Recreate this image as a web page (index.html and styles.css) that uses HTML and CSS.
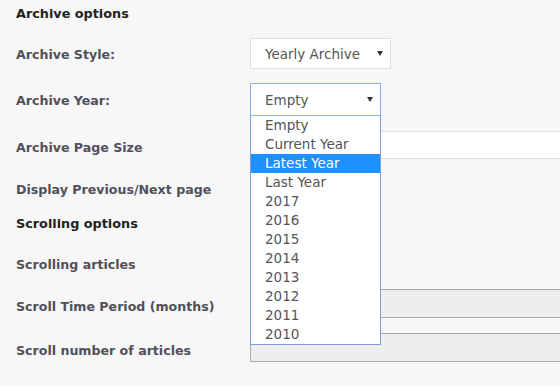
FILE: index.html
```html
<!DOCTYPE html>
<html>
<head>
<meta charset="utf-8">
<link rel="stylesheet" href="styles.css">
</head>
<body>
<form class="form">
  <div class="heading h-archive">Archive options</div>
  <div class="row r-style">
    <div class="label">Archive Style:</div>
    <div class="select sel-style"><span>Yearly Archive</span><i class="arrow"></i></div>
  </div>
  <div class="row r-year">
    <div class="label">Archive Year:</div>
    <div class="select-wrap">
      <div class="select sel-year focus"><span>Empty</span><i class="arrow"></i></div>
      <ul class="dropdown">
        <li>Empty</li>
        <li>Current Year</li>
        <li class="active">Latest Year</li>
        <li>Last Year</li>
        <li>2017</li>
        <li>2016</li>
        <li>2015</li>
        <li>2014</li>
        <li>2013</li>
        <li>2012</li>
        <li>2011</li>
        <li>2010</li>
      </ul>
    </div>
  </div>
  <div class="row r-size">
    <div class="label lower">Archive Page Size</div>
    <div class="input"></div>
  </div>
  <div class="row r-prev">
    <div class="label">Display Previous/Next page</div>
  </div>
  <div class="heading h-scroll">Scrolling options</div>
  <div class="row r-articles">
    <div class="label">Scrolling articles</div>
  </div>
  <div class="row r-period">
    <div class="label lower">Scroll Time Period (months)</div>
    <div class="input disabled"></div>
  </div>
  <div class="row r-number">
    <div class="label lower">Scroll number of articles</div>
    <div class="input disabled"></div>
  </div>
</form>
</body>
</html>
```

FILE: styles.css
```css
html, body {
  margin: 0;
  padding: 0;
  background: #f7f7f7;
  overflow: hidden;
}
body {
  width: 560px;
  height: 386px;
  font-family: "DejaVu Sans", sans-serif;
}
.form {
  display: flex;
  flex-direction: column;
  padding-left: 16px;
}
.heading {
  font-weight: bold;
  font-size: 12.8px;
  color: #222;
  height: 26px;
  line-height: 27px;
}
.h-scroll {
  margin-top: 9px;
  height: 24px;
  line-height: 24px;
}
.row {
  display: flex;
  align-items: center;
}
.label {
  width: 234px;
  flex: none;
  font-weight: bold;
  font-size: 12.6px;
  color: #50505a;
  padding-top: 1px;
}
.label.lower {
  padding-top: 5px;
}
.r-style { margin-top: 12px; height: 31px; }
.r-year { margin-top: 14px; height: 33px; }
.r-size { margin-top: 15px; height: 28px; }
.r-prev { margin-top: 16px; height: 28px; }
.r-articles { margin-top: 14px; height: 28px; }
.r-period { margin-top: 11px; height: 29px; }
.r-number { margin-top: 15px; height: 29px; }

.select {
  box-sizing: border-box;
  display: flex;
  align-items: center;
  justify-content: space-between;
  background: #fff;
  border: 1px solid #dedede;
  font-size: 13.5px;
  color: #555;
  padding: 0 7px 0 14px;
}
.sel-style { width: 141px; height: 31px; }
.select-wrap {
  position: relative;
  width: 131px;
  height: 33px;
}
.sel-year { width: 131px; height: 33px; }
.select.focus {
  border-color: #8cb0ef;
}
.arrow {
  width: 0;
  height: 0;
  border-left: 3px solid transparent;
  border-right: 3px solid transparent;
  border-top: 5px solid #333;
}
.dropdown {
  position: absolute;
  top: 33px;
  left: 0;
  z-index: 2;
  box-sizing: border-box;
  width: 131px;
  margin: 0;
  padding: 0;
  list-style: none;
  background: #fff;
  border: 1px solid #7d9fdc;
  border-top: none;
}
.dropdown li {
  height: 19px;
  line-height: 19px;
  padding-left: 14px;
  font-size: 13.5px;
  color: #555;
}
.dropdown li.active {
  background: #1e90ff;
  color: #fff;
}
.input {
  box-sizing: border-box;
  flex: 1;
  height: 100%;
  background: #fff;
  border: 1px solid #dedede;
  border-right: none;
}
.input.disabled {
  background: #eeeeee;
  border-color: #aaaaaa;
}
```
